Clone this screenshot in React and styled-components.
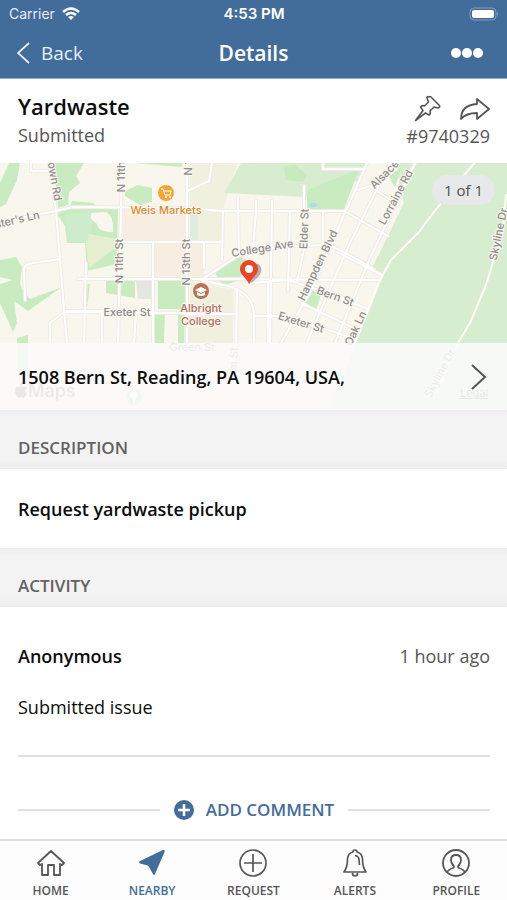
import React from "react";
import styled, { createGlobalStyle } from "styled-components";

const blue = "#426d9b";
const ink = "#565656";
const rule = "#e0e0e0";

const GlobalStyle = createGlobalStyle`
  * { box-sizing: border-box; }
  body {
    margin: 0;
    background: #fff;
    color: #0c0c0c;
    font-family: "Open Sans", "Noto Sans", sans-serif;
    font-size: 18px;
  }
  button { border: 0; padding: 0; background: none; font: inherit; color: inherit; cursor: pointer; }
  a { color: inherit; text-decoration: none; }
  h1, h2, h3, p { margin: 0; }
  svg { display: block; flex: none; }
`;

const Screen = styled.div`
  min-height: 100vh;
  display: flex;
  flex-direction: column;
`;

const Top = styled.header`
  background: ${blue};
  color: #fff;
  border-bottom: 1px solid #8eaccc;
`;

const StatusBar = styled.div`
  display: grid;
  grid-template-columns: 1fr auto 1fr;
  align-items: center;
  height: 27px;
  padding: 0 8px 0 9px;
  font: 400 14px/18px Inter, sans-serif;
`;

const Carrier = styled.span`
  display: flex;
  align-items: center;
  gap: 7px;
  color: #e3ebf3;
`;

const Clock = styled.time`
  font-size: 15px;
  font-weight: 600;
`;

const Battery = styled.svg`
  justify-self: end;
`;

const NavBar = styled.nav`
  display: grid;
  grid-template-columns: 1fr auto 1fr;
  align-items: center;
  height: 51px;
  padding: 0 17px;
`;

const BackButton = styled.button`
  display: flex;
  align-items: center;
  gap: 11px;
  color: #e6eef6;
  font-size: 19px;
  line-height: 26px;
`;

const NavTitle = styled.h1`
  font-size: 21px;
  line-height: 26px;
  font-weight: 600;
`;

const MoreButton = styled.button`
  justify-self: end;
  margin-right: 7px;
`;

const Summary = styled.section`
  display: flex;
  justify-content: space-between;
  height: 84px;
  padding: 12px 17px 0 18px;
`;

const IssueTitle = styled.h2`
  font-size: 22px;
  line-height: 30px;
  font-weight: 600;
`;

const Muted = styled.p`
  color: ${ink};
  font-size: 18px;
  line-height: 28px;
`;

const SummarySide = styled.div`
  display: flex;
  flex-direction: column;
  align-items: flex-end;
  color: ${ink};
`;

const IconRow = styled.div`
  display: flex;
  gap: 19px;
  height: 31px;
  padding-top: 4px;
`;

const MapArea = styled.section`
  position: relative;
  height: 247px;
  overflow: hidden;
`;

const MapDrawing = styled.svg`
  width: 100%;
  height: 100%;
`;

const Counter = styled.span`
  position: absolute;
  top: 12px;
  right: 12px;
  padding: 0 12px;
  border-radius: 15px;
  background: #e6e8ea;
  color: #505050;
  font-size: 15px;
  line-height: 30px;
`;

const AddressRow = styled.a`
  position: absolute;
  left: 0;
  right: 0;
  bottom: 0;
  height: 67px;
  padding: 0 20px 0 18px;
  display: flex;
  align-items: center;
  justify-content: space-between;
  background: rgba(251, 251, 251, 0.88);
  font-size: 18px;
  font-weight: 600;
`;

const SectionHead = styled.h3`
  height: 59px;
  padding: 26px 18px 0;
  background: linear-gradient(#eeeeee, #f3f3f3 8px, #f3f3f3 50px, #ededed);
  color: #626262;
  font-size: 17px;
  line-height: 24px;
  font-weight: 600;
`;

const Description = styled.p`
  padding: 27px 18px 26px;
  font-size: 18px;
  line-height: 26px;
  font-weight: 600;
`;

const Activity = styled.article`
  margin: 0 17px 0 18px;
  padding-top: 35px;
  border-bottom: 2px solid ${rule};
`;

const ActivityHead = styled.header`
  display: flex;
  justify-content: space-between;
  line-height: 28px;
  color: ${ink};
`;

const Author = styled.strong`
  font-weight: 600;
  color: #0c0c0c;
`;

const Comment = styled.p`
  padding: 24px 0 35px;
  line-height: 26px;
`;

const AddRow = styled.div`
  display: flex;
  align-items: center;
  gap: 14px;
  padding: 40px 17px 16px 18px;
  &::before, &::after {
    content: "";
    flex: 1;
    height: 2px;
    background: ${rule};
  }
`;

const AddButton = styled.button`
  display: flex;
  align-items: center;
  gap: 12px;
  color: ${blue};
  font-size: 17px;
  line-height: 26px;
  font-weight: 600;
`;

const Tabs = styled.nav`
  position: sticky;
  bottom: 0;
  margin-top: auto;
  display: grid;
  grid-template-columns: repeat(5, 1fr);
  height: 61px;
  border-top: 2px solid ${rule};
  background: #fdfdfd;
`;

const Tab = styled.a`
  display: flex;
  flex-direction: column;
  align-items: center;
  gap: 6px;
  padding-top: 8px;
  color: ${(p) => (p.$active ? blue : ink)};
  font-size: 12px;
  line-height: 16px;
  font-weight: 600;
`;

const Glyph = styled.svg`
  fill: none;
  stroke: currentColor;
  stroke-width: ${(p) => p.$weight || 2};
  stroke-linejoin: round;
`;

const Label = styled.text`
  font-family: Inter, sans-serif;
  font-size: 11px;
  font-weight: 500;
  fill: ${(p) => p.$tone || "#8f8d8c"};
  stroke: #f9f6ef;
  stroke-width: 2px;
  paint-order: stroke;
  text-anchor: middle;
`;

const streets = [
  "M49 163 L56 211 L64 310",
  "M0 222 L56 211 L72 207 L187 208 L222 211",
  "M31 163 V171 H50",
  "M25 300 L24 270 Q24 264 33 263 L60 259",
  "M122 163 L121 210 L118 343",
  "M187 163 L187 343",
  "M187 191 L209 181 L212 163",
  "M121 242 H220",
  "M153 242 V343",
  "M204 242 V268",
  "M78 279 H230 L380 280",
  "M86 263 L84 343",
  "M64 310 L67 343",
  "M50 343 V323 L65 311 H102 V343",
  "M65 312 L187 313",
  "M136 312 L134 343",
  "M187 314 H235",
  "M201 280 L236 257 Q262 246 300 246 L329 245 Q347 253 372 268",
  "M222 260 L223 211 H345",
  "M238 197 V211 L239 255",
  "M256 201 V211 L253 250",
  "M272 201 L270 343",
  "M290 211 L288 290",
  "M304 186 L304 249 L297 282",
  "M323 211 V245",
  "M201 280 L232 287 Q254 296 254 315 V343",
  "M237 290 L236 343",
  "M250 283 L288 280 L330 294 L368 309",
  "M254 316 H280 L335 332 L356 340",
  "M268 283 V343",
  "M367 163 L337 231 L310 292 L281 343",
  "M323 163 V169 H363",
  "M390 163 L350 243 L325 300 L307 343",
  "M415 163 L370 258 L335 343",
  "M344 211 L388 236",
  "M357 190 L370 186 L398 205",
  "M337 252 L382 275",
  "M315 285 L368 309",
  "M301 303 L360 331",
];

const greens = [
  "M9 163 H20 L17 180 L6 204 L0 207 V183Z",
  "M54 163 H84 L76 176 L80 183 L69 192 L68 205 L58 208Z",
  "M72 201 L94 203 L95 207 H70Z",
  "M56 212 L74 208 H118 L117 264 L87 271 L85 243 H67 L65 226Z",
  "M125 191 L138 185 L152 188 V202 L140 205 L125 196Z",
  "M134 163 H182 V167Z",
  "M0 260 L16 257 L22 267 L20 283 L22 289 L30 299 L62 287 L28 311 L14 301 L17 323 L13 332 L0 303 V284 L13 280 L0 277Z",
  "M17 338 L28 335 V374 L17 368Z",
  "M86 284 H90 L87 308Z",
  "M106 281 H135 V298 L106 293Z",
  "M158 281 H185 V309 H158Z",
  "M153 314 H165 L164 343 H152Z",
  "M178 314 H184 V343 H178Z",
  "M215 273 L238 256 L251 262 L239 280 L223 286Z",
  "M307 190 L359 169 L343 212 H307Z",
  "M389 176 L401 168 L395 188Z",
  "M303 299 L311 288 L322 291 L316 311 L301 305Z",
];

function StreetMap() {
  return (
    <MapDrawing viewBox="0 163 507 247" preserveAspectRatio="xMidYMid slice" role="img" aria-label="Map of Reading, PA">
      <rect x="-300" y="163" width="1200" height="247" fill="#f9f6ee" />
      <path d="M123 209 H187 V242 H123Z M155 244 H185 V279 H155Z M189 243 H204 V278 H189Z" fill="#f7eee1" />
      <path d="M190 163 H237 L223 211 V241 H190Z M190 281 L233 290 V343 H184 V315 H190Z" fill="#eff0dd" />
      <path d="M241 163 H367 L360 180 L307 197 L224 193Z" fill="#d8edcf" />
      <path d="M284 167 L295 165 L307 175 L303 182 L286 180Z" fill="#c9eabe" />
      <path d="M397 163 H900 V410 H330 L356 343 L383 276 L373 266 L388 236 L404 202 L400 190Z" fill="#d7edcf" />
      {greens.map((d) => <path key={d} d={d} fill="#c8ecc0" />)}
      <path d="M66 214 L90 211 L92 225 L89 242 H67Z" fill="#cdeccb" />
      <path d="M91 213 L106 212 Q114 216 113 232 Q98 232 97 224 L91 219Z" fill="#f9f6ee" />
      <path d="M86 245 L89 234 L117 239 L117 247 L89 268Z" fill="#e5efcf" />
      <path d="M136 281 H153 V299 H138Z" fill="#e4e6df" />
      <path d="M190 214 H198 V240 H190Z" fill="#deebe1" />
      <ellipse cx="313" cy="205" rx="4" ry="2" fill="#a7dcf3" />
      <g fill="none" strokeLinecap="round" strokeLinejoin="round">
        {streets.map((d) => <path key={d} d={d} stroke="#efebe5" strokeWidth="4" />)}
        {streets.map((d) => <path key={d} d={d} stroke="#fff" strokeWidth="2" />)}
        <path d="M477 160 Q440 203 419 232 L391 260 L380 280 L355 343" stroke="#fffdf7" strokeWidth="2" />
        <path d="M506 195 L503 230 L486 285 L470 323 L458 343 L437 392" stroke="#fffdf7" strokeWidth="2" />
      </g>

      <Label transform="translate(50 176) rotate(80)">Crown Rd</Label>
      <Label transform="translate(15 224) rotate(-13)">aster's Ln</Label>
      <Label transform="translate(125 170) rotate(-90)">N 11th St</Label>
      <Label transform="translate(123 261) rotate(-90)">N 11th St</Label>
      <Label transform="translate(192 152) rotate(-90)">N 13th St</Label>
      <Label transform="translate(190 262) rotate(-90)">N 13th St</Label>
      <Label x="127" y="316">Exeter St</Label>
      <Label transform="translate(263 252) rotate(-9)">College Ave</Label>
      <Label transform="translate(308 229) rotate(-88)">Elder St</Label>
      <Label transform="translate(321 267) rotate(-64)">Hampden Blvd</Label>
      <Label transform="translate(387 177) rotate(-45)">Alsace</Label>
      <Label transform="translate(399 199) rotate(-62)">Lorraine Rd</Label>
      <Label transform="translate(502 235) rotate(-78)">Skyline Dr</Label>
      <Label transform="translate(334 300) rotate(20)">Bern St</Label>
      <Label transform="translate(300 326) rotate(17)">Exeter St</Label>
      <Label transform="translate(359 330) rotate(-65)">Oak Ln</Label>
      <Label transform="translate(192 351)">Green St</Label>
      <Label transform="translate(237 364) rotate(-86)">Elm St</Label>
      <Label transform="translate(443 375) rotate(-62)">Skyline Dr</Label>
      <Label $tone="#dc8c2f" x="166" y="214">Weis Markets</Label>
      <Label $tone="#b27060" x="201" y="312">Albright</Label>
      <Label $tone="#b27060" x="201" y="325">College</Label>

      <circle cx="166" cy="193" r="8" fill="#f3a536" />
      <path d="M161 189 h2 l2 6 h5 l1 -4 h-7" fill="none" stroke="#fff" strokeWidth="1" />
      <circle cx="166" cy="197" r="1" fill="#fff" />
      <circle cx="170" cy="197" r="1" fill="#fff" />
      <circle cx="201" cy="291" r="8" fill="#b87458" />
      <path d="M195 290 l6 -3 6 3 -6 3z M197 292 v3 q4 2 8 0 v-3 l-4 2z" fill="#fff" />

      <circle cx="134" cy="397" r="8" fill="#aedcae" />
      <circle cx="134" cy="395" r="4" fill="#fff" />
      <path d="M134 396 v8" stroke="#fff" strokeWidth="2" />

      <path d="M249 284 Q263 276 261 268 Q260 263 254 264Z" fill="#6b6b6b" opacity="0.5" />
      <path d="M249 284 C246 277 240 275 240 269 A9 9 0 0 1 258 269 C258 275 252 277 249 284Z" fill="#ec4526" />
      <circle cx="249" cy="269" r="4" fill="#fff" />

      <g fill="#6c6c6c">
        <path d="M24 387 q-3 -1 -5 0 -4 -1 -4 4 0 4 3 7 1 0 3 -1 2 1 3 1 2 -2 3 -4 -4 -3 0 -6 -1 -2 -3 -1z M20 386 q0 -3 3 -4 0 3 -3 4z" />
        <text x="28" y="397" fontFamily="Inter, sans-serif" fontSize="18" fontWeight="500">Maps</text>
        <text x="460" y="397" fontFamily="Inter, sans-serif" fontSize="11" textDecoration="underline">Legal</text>
      </g>
    </MapDrawing>
  );
}

const tabs = [
  {
    name: "HOME",
    icon: (
      <Glyph width="30" height="28" viewBox="0 0 30 28" $weight={1.8}>
        <path d="M2 14 L15 2 L28 14 L26 16 L24 15 V26 H18 V16 H12 V26 H6 V15 L4 16Z" />
      </Glyph>
    ),
  },
  {
    name: "NEARBY",
    icon: (
      <svg width="30" height="28" viewBox="0 0 30 28" fill="currentColor">
        <path d="M26 1 Q28 0 27.500 3 L18 25 Q17 27 16 25 L12 18 Q11 16 9 16 L3 14.500 Q1 13 3 12Z" />
      </svg>
    ),
  },
  {
    name: "REQUEST",
    icon: (
      <Glyph width="30" height="28" viewBox="0 0 30 28" $weight={1.7}>
        <circle cx="15" cy="14" r="13" />
        <path d="M15 5 V23 M6 14 H24" />
      </Glyph>
    ),
  },
  {
    name: "ALERTS",
    icon: (
      <Glyph width="30" height="28" viewBox="0 0 30 28" $weight={1.7}>
        <path d="M13 3 Q13 1 15 1 T17 3 Q22 4 22.500 10 Q22.500 18 26 23 H4 Q7.500 18 7.500 10 Q8 4 13 3Z M12.500 24 Q12.500 27 15 27 T17.500 24 M15 6.500 Q19 7 19 11 L19.500 16" />
      </Glyph>
    ),
  },
  {
    name: "PROFILE",
    icon: (
      <Glyph width="30" height="28" viewBox="0 0 30 28" $weight={1.8}>
        <circle cx="15" cy="14" r="13" />
        <path d="M6 23 Q8 20 12 19 Q14 18 12 16 Q10 14 10 11 Q10 6 15 6 T20 11 Q20 14 18 16 Q16 18 18 19 Q22 20 24 23" />
      </Glyph>
    ),
  },
];

export default function App() {
  return (
    <Screen>
      <GlobalStyle />
      <Top>
        <StatusBar>
          <Carrier>
            Carrier
            <svg width="18" height="14" viewBox="0 0 18 14" fill="none" stroke="#fff" strokeWidth="2.6">
              <path d="M1 5 Q9 -2 17 5 M4 8 Q9 4 14 8" />
              <path d="M9 13 L6 10 Q9 8 12 10Z" fill="#fff" stroke="none" />
            </svg>
          </Carrier>
          <Clock>4:53 PM</Clock>
          <Battery width="30" height="14" viewBox="0 0 30 14">
            <rect x="1" y="1" width="26" height="12" rx="4" fill="none" stroke="#819dbb" />
            <rect x="3" y="3" width="22" height="8" rx="2" fill="#fff" />
            <path d="M28 5 q2 2 0 4z" fill="#819dbb" />
          </Battery>
        </StatusBar>
        <NavBar>
          <BackButton type="button">
            <svg width="13" height="22" viewBox="0 0 13 22" fill="none" stroke="currentColor" strokeWidth="1.8">
              <path d="M12 1 L1 11 L12 21" />
            </svg>
            Back
          </BackButton>
          <NavTitle>Details</NavTitle>
          <MoreButton type="button" aria-label="More options">
            <svg width="34" height="12" viewBox="0 0 34 12" fill="#fff">
              <circle cx="7" cy="6" r="5" />
              <circle cx="18" cy="6" r="5" />
              <circle cx="29" cy="6" r="5" />
            </svg>
          </MoreButton>
        </NavBar>
      </Top>

      <Summary>
        <div>
          <IssueTitle>Yardwaste</IssueTitle>
          <Muted>Submitted</Muted>
        </div>
        <SummarySide>
          <IconRow>
            <button type="button" aria-label="Pin">
              <Glyph width="27" height="27" viewBox="0 0 27 27" $weight={1.6}>
                <path d="M15 2 Q13 1 13 3 L14.500 7 L10.500 11 Q8 10 6.500 12 L9 15.500 L1.500 25.500 L11.500 18 L15 20 Q17 19 16 16 L20 12 L24 13 Q27 12 25 10 L17 2 Q16 1 15 2Z M1.500 25.500 L8 17" />
              </Glyph>
            </button>
            <button type="button" aria-label="Share">
              <Glyph width="30" height="27" viewBox="0 0 30 27" $weight={1.8}>
                <path d="M17 4 L29 14 L17 24 V18 Q6 18 1 24 Q1 10 17 9Z" />
              </Glyph>
            </button>
          </IconRow>
          <Muted>#9740329</Muted>
        </SummarySide>
      </Summary>

      <MapArea>
        <StreetMap />
        <Counter>1 of 1</Counter>
        <AddressRow href="#location">
          1508 Bern St, Reading, PA 19604, USA,
          <svg width="16" height="26" viewBox="0 0 16 26" fill="none" stroke="#555" strokeWidth="2">
            <path d="M1 1 L14 13 L1 25" />
          </svg>
        </AddressRow>
      </MapArea>

      <SectionHead>DESCRIPTION</SectionHead>
      <Description>Request yardwaste pickup</Description>
      <SectionHead>ACTIVITY</SectionHead>
      <Activity>
        <ActivityHead>
          <Author>Anonymous</Author>
          <time>1 hour ago</time>
        </ActivityHead>
        <Comment>Submitted issue</Comment>
      </Activity>
      <AddRow>
        <AddButton type="button">
          <svg width="20" height="20" viewBox="0 0 20 20">
            <circle cx="10" cy="10" r="10" fill={blue} />
            <path d="M10 4 V16 M4 10 H16" stroke="#fff" strokeWidth="2.6" />
          </svg>
          ADD COMMENT
        </AddButton>
      </AddRow>

      <Tabs aria-label="Main">
        {tabs.map(({ name, icon }) => (
          <Tab key={name} href={`#${name.toLowerCase()}`} $active={name === "NEARBY"} aria-current={name === "NEARBY" ? "page" : undefined}>
            {icon}
            {name}
          </Tab>
        ))}
      </Tabs>
    </Screen>
  );
}
